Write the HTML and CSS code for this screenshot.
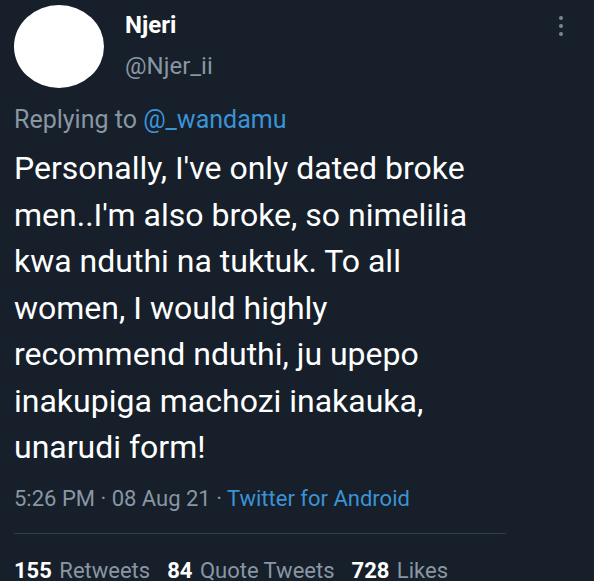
FILE: index.html
```html
<!DOCTYPE html>
<html>
<head>
<meta charset="utf-8">
<link rel="stylesheet" href="styles.css">
</head>
<body>
<div class="tweet">
  <div class="header">
    <div class="avatar"></div>
    <div class="names">
      <div class="name">Njeri</div>
      <div class="handle">@Njer_ii</div>
    </div>
    <div class="more"><span></span><span></span><span></span></div>
  </div>
  <div class="reply">Replying to <span class="link">@_wandamu</span></div>
  <div class="text">Personally, I've only dated broke men..I'm also broke, so nimelilia kwa nduthi na tuktuk. To all women, I would highly recommend nduthi, ju upepo inakupiga machozi inakauka, unarudi form!</div>
  <div class="meta">5:26 PM · 08 Aug 21 · <span class="link">Twitter for Android</span></div>
  <div class="divider"></div>
  <div class="stats">
    <span class="stat"><b>155</b> Retweets</span>
    <span class="stat"><b>84</b> Quote Tweets</span>
    <span class="stat"><b>728</b> Likes</span>
  </div>
</div>
</body>
</html>
```
FILE: styles.css
```css
html, body {
  margin: 0;
  padding: 0;
  background: #161f2a;
}
body {
  font-family: Roboto, "Noto Sans", sans-serif;
  color: #ffffff;
  width: 594px;
  height: 581px;
  overflow: hidden;
}
.tweet {
  padding: 0 0 0 14px;
}
.header {
  display: flex;
  align-items: flex-start;
  height: 105px;
}
.avatar {
  width: 90px;
  height: 83px;
  border-radius: 50%;
  background: #ffffff;
  margin-top: 5px;
  flex: none;
}
.names {
  margin-left: 21px;
  padding-top: 10px;
}
.name {
  font-weight: bold;
  font-size: 24px;
  line-height: 30px;
}
.handle {
  font-size: 24px;
  line-height: 30px;
  margin-top: 11px;
  color: #8996a3;
}
.more {
  margin-left: auto;
  margin-right: 31px;
  margin-top: 16px;
  display: flex;
  flex-direction: column;
  gap: 4px;
}
.more span {
  width: 4px;
  height: 4px;
  border-radius: 50%;
  background: #7c8896;
}
.reply {
  font-size: 25px;
  line-height: 30px;
  color: #8996a3;
}
.link {
  color: #3b93d6;
}
.text {
  font-size: 32px;
  line-height: 46.5px;
  margin-top: 10px;
  width: 475px;
}
.meta {
  font-size: 22px;
  line-height: 28px;
  color: #8996a3;
  margin-top: 14px;
}
.divider {
  height: 1px;
  background: #323d48;
  width: 492px;
  margin-top: 20px;
}
.stats {
  font-size: 22px;
  line-height: 28px;
  color: #8996a3;
  margin-top: 23px;
  display: flex;
  gap: 17px;
  white-space: nowrap;
}
.stats b {
  color: #ffffff;
  margin-right: 2px;
}
```
